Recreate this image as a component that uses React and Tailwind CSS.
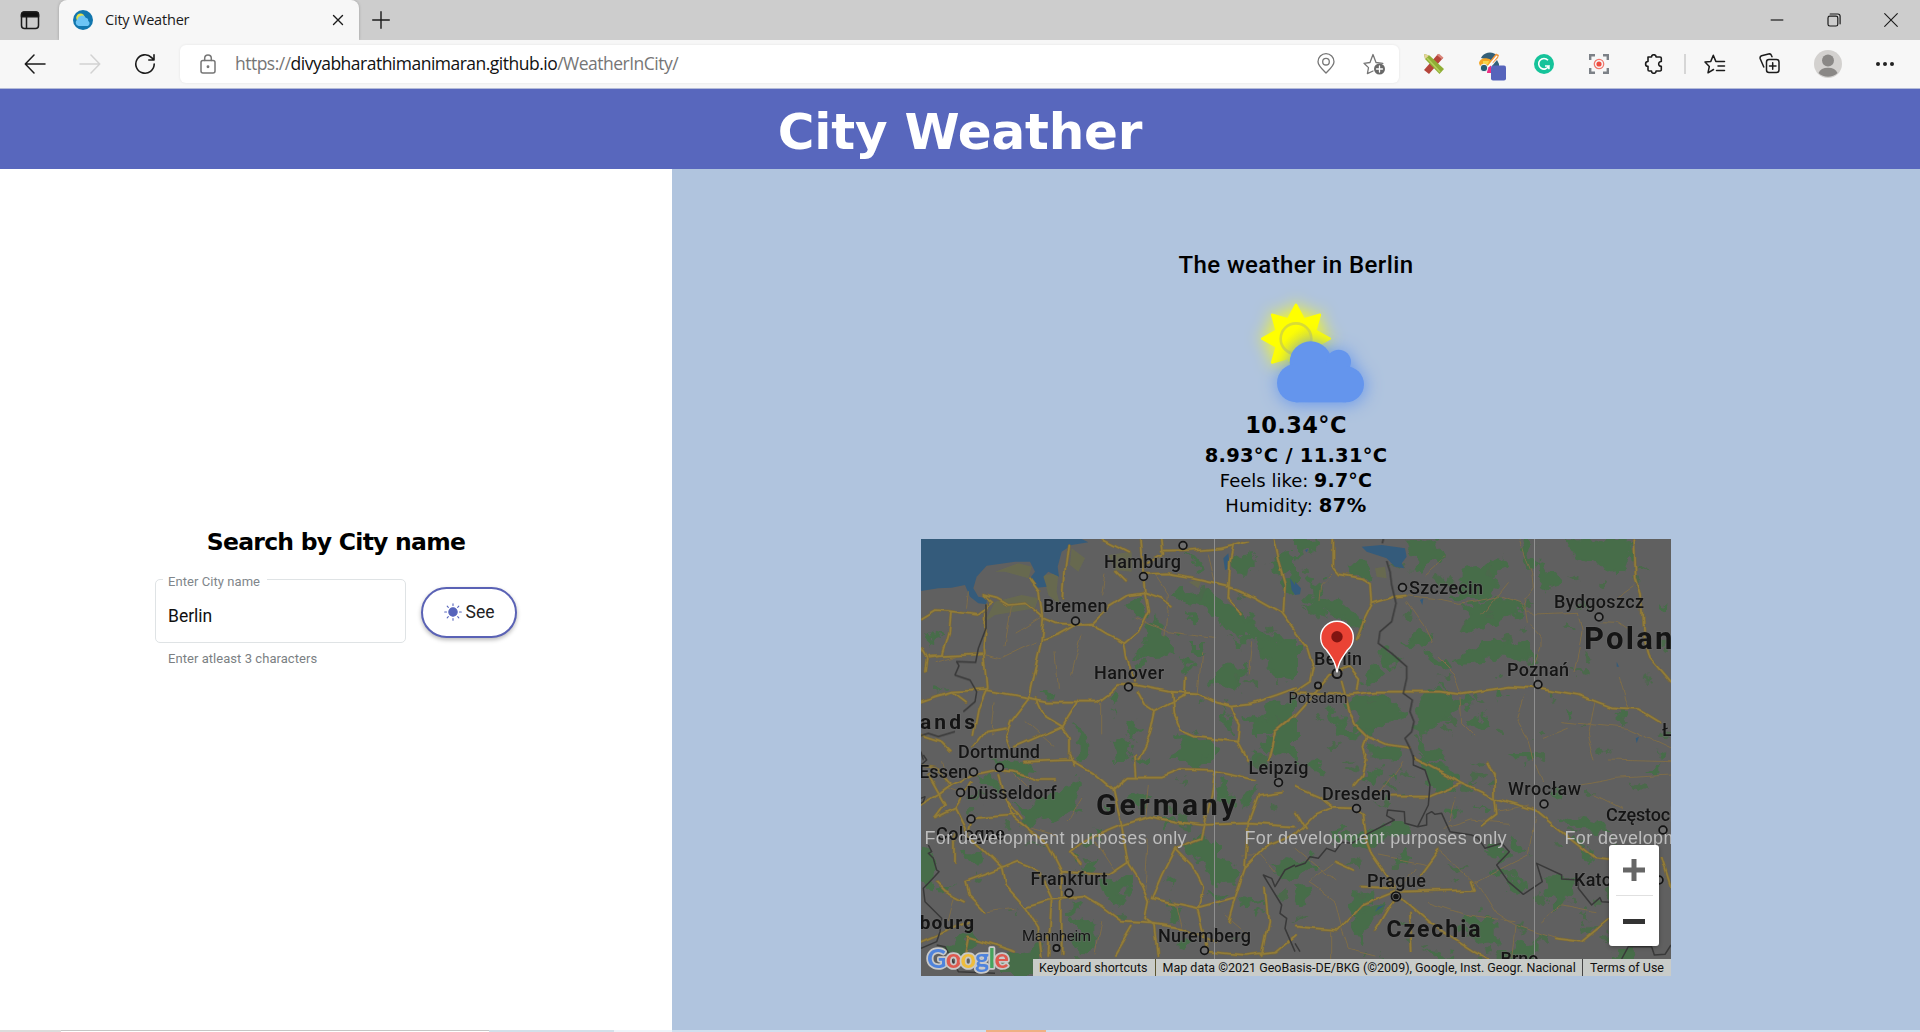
import React from "react";

const VERDANA = "font-['DejaVu_Sans',Verdana,sans-serif]";
const ROBOTO = "font-[Roboto,sans-serif]";

/* ---------- browser chrome ---------- */

function Stroke({ w = 20, h = 20, box = "0 0 20 20", c = "#1b1b1b", sw = 1.5, children }) {
  return (
    <svg width={w} height={h} viewBox={box} fill="none" stroke={c} strokeWidth={sw} strokeLinecap="round" strokeLinejoin="round" className="shrink-0">
      {children}
    </svg>
  );
}

function TabBar() {
  return (
    <div className="flex h-10 items-stretch bg-[#cdcdcd]">
      <div className="flex w-[59px] items-center justify-center">
        <Stroke>
          <rect x="1.5" y="2" width="17" height="16.5" rx="3" />
          <path d="M1.5 4.5a2.5 2.5 0 0 1 2.500-2.500h12a2.500 2.500 0 0 1 2.500 2.500v2.200h-17z" fill="#111" />
          <path d="M6.500 7v11" />
        </Stroke>
      </div>
      <div className="flex w-[300px] items-center rounded-t-lg bg-[#f7f7f7] pl-[14px] shadow-[0_0_3px_rgba(0,0,0,0.25)]">
        <svg width="20" height="20" viewBox="0 0 20 20">
          <circle cx="10" cy="10" r="10" fill="#1176ae" />
          <circle cx="7.500" cy="7.800" r="4.300" fill="#e3e04a" />
          <path d="M5.500 16a3.500 3.500 0 0 1-1-6.500 4.500 4.500 0 0 1 8.300-1.800 3 3 0 0 1 2.400 3.300 2.800 2.800 0 0 1-.4 5z" fill="#6cc4f5" />
        </svg>
        <span className="ml-3 w-[227px] whitespace-nowrap pb-px font-['Open_Sans',sans-serif] text-[14.5px] tracking-[-0.2px] text-[#1a1a1a]">City Weather</span>
        <Stroke w={12} h={12} box="0 0 12 12" sw={1.4}><path d="M1.500 1.500l9 9M10.500 1.500l-9 9" /></Stroke>
      </div>
      <div className="flex w-[43px] items-center justify-center pb-px">
        <Stroke w={18} h={18} box="0 0 18 18" sw={1.400}><path d="M9 .7v16.600M.7 9h16.600" /></Stroke>
      </div>
      <div className="ml-auto flex items-center pr-[1px]">
        <div className="flex w-[57px] justify-center"><Stroke w={14} h={14} box="0 0 14 14" sw={1.200}><path d="M.7 7h12.600" strokeLinecap="butt" /></Stroke></div>
        <div className="flex w-[57px] justify-center">
          <Stroke w={14} h={14} box="0 0 14 14" sw={1.200}><rect x="1" y="3.200" width="9.800" height="9.800" rx="1.800" /><path d="M3.200 1h7.600a2.300 2.300 0 0 1 2.300 2.300v7.500" /></Stroke>
        </div>
        <div className="flex w-[57px] justify-center"><Stroke w={14} h={14} box="0 0 14 14" sw={1.100}><path d="M.7.7l12.600 12.600M13.300.7L.7 13.300" /></Stroke></div>
      </div>
    </div>
  );
}

function Cell({ children }) {
  return <div className="flex w-[55px] shrink-0 items-center justify-center">{children}</div>;
}

function Toolbar() {
  return (
    <div className="flex h-[49px] items-center border-b border-[#b3bbd8] bg-[#f7f7f7] pb-px">
      <div className="ml-[7px] flex">
        <Cell><Stroke w={22} h={20} box="0 0 22 20"><path d="M21 10H1.500M10 1L1.300 10l8.700 9" /></Stroke></Cell>
        <Cell><Stroke w={22} h={20} box="0 0 22 20" c="#d2d2d2"><path d="M1 10h19.500M12 1l8.700 9-8.700 9" /></Stroke></Cell>
        <Cell><Stroke w={22} h={22} box="0 0 22 22" sw={1.600}><path d="M20.200 11a9.200 9.200 0 1 1-2.600-6.400L20 7M20 1.800V7h-5.200" /></Stroke></Cell>
      </div>
      <div className="ml-[8px] flex h-[38px] w-[1219px] items-center rounded-md bg-white shadow-[0_0_3px_rgba(0,0,0,0.08)]">
        <div className="ml-5 flex w-[15px] justify-center">
          <Stroke w={16} h={20} box="0 0 16 20" c="#767676"><rect x="1" y="6.500" width="14" height="12.500" rx="2" /><path d="M4.700 6.500V4.200a3.300 3.300 0 0 1 6.600 0v2.300" /><circle cx="8" cy="12.700" r=".7" fill="#767676" /></Stroke>
        </div>
        <span className="ml-[20px] whitespace-nowrap font-['Open_Sans',sans-serif] text-[17.5px] tracking-[-0.51px] text-[#767676]">
          https://<span className="text-[#111]">divyabharathimanimaran.github.io</span>/WeatherInCity/
        </span>
        <div className="ml-auto mr-[13px] flex items-center gap-[28px]">
          <Stroke w={18} h={21} box="0 0 18 21" c="#767676" sw={1.300}><path d="M9 20C5 16 1 12.500 1 8.700a8 8 0 0 1 16 0C17 12.500 13 16 9 20z" /><circle cx="9" cy="8.700" r="3.300" /></Stroke>
          <Stroke w={23} h={22} box="0 0 23 22" c="#767676" sw={1.300}>
            <path d="M10 18l-5.600 2.600 1.100-6L1 10.300l6-.8L10 1.500l3 8 6.800.8" />
            <circle cx="16.500" cy="16" r="5.500" fill="#696969" stroke="none" />
            <path d="M16.500 13v6M13.500 16h6" stroke="#fff" />
          </Stroke>
        </div>
      </div>
      <div className="ml-[7px] flex items-center">
        <Cell>
          <svg width="22" height="22" viewBox="0 0 22 22"><path d="M1 17L15 1l5 4L6 21z" fill="#b5453b" /><path d="M14 2.200l2-1.500 4.500 4-1.500 1.600z" fill="#d9867b" /><path d="M1 1l5.500 1.500L21 16l-4.500 5L2 6z" fill="#8fae35" /><path d="M1 1l5 1.500L2.200 6z" fill="#e8d49a" /><path d="M4 5l13 14" stroke="#b5cf5c" strokeWidth="1.500" /></svg>
        </Cell>
        <Cell>
          <svg width="30" height="30" viewBox="0 0 30 30" className="ml-[7px] mt-[7px]">
            <path d="M4 6A10 10 0 0 1 19 2.500L15 9z" fill="#345f78" />
            <path d="M2 11a7 5.500 0 0 1 13-2l-3 5H3z" fill="#f5a623" />
            <path d="M6 9h6l-1 3H6z" fill="#f8d64a" />
            <path d="M13 9l6-7.500 3 1.500-1 3-5 5z" fill="#f3973a" />
            <path d="M15 14l5-6 2 4v3h-7z" fill="#33617a" />
            <path d="M10 16l10-12" stroke="#fff" strokeWidth="1.500" />
            <path d="M10.500 16l3.500-2.500V21h-4z" fill="#ec2d82" />
            <circle cx="7" cy="16" r="3.800" fill="#275d74" stroke="#fff" />
            <rect x="14" y="13.500" width="15" height="15" rx="2" fill="#5664bb" />
          </svg>
        </Cell>
        <Cell>
          <svg width="20" height="20" viewBox="0 0 20 20" fill="none"><circle cx="10" cy="10" r="10" fill="#15c39a" /><path d="M14 6.300A5.300 5.300 0 1 0 14.800 12H11M14.900 11.300v4" stroke="#fff" strokeWidth="1.600" /></svg>
        </Cell>
        <Cell>
          <svg width="20" height="20" viewBox="0 0 20 20" fill="none"><path d="M1.200 6V1.200H6M14 1.200h4.800V6M18.800 14v4.800H14M6 18.800H1.200V14" stroke="#7c8187" strokeWidth="2.400" /><circle cx="10" cy="10" r="4.700" stroke="#f0786e" strokeWidth="1.300" /><circle cx="10" cy="10" r="2.600" fill="#ee4c40" /></svg>
        </Cell>
        <Cell>
          <Stroke w={20} h={20} sw={1.600}><path d="M4 3h3.500a2.300 2.300 0 0 1 4.600 0H16a1.300 1.300 0 0 1 1.300 1.300v3.200c-3.500-.2-3.500 5 0 4.800v3.200A1.300 1.300 0 0 1 16 17h-3.900a2.300 2.300 0 0 1-4.600 0H5.300A1.300 1.300 0 0 1 4 15.700v-3.400a2.400 2.400 0 0 1 0-4.800z" /></Stroke>
        </Cell>
      </div>
      <div className="ml-[3px] h-5 w-[2px] bg-[#d6d6d6]" />
      <div className="ml-[1px] flex items-center">
        <Cell><Stroke w={22} h={20} box="0 0 22 20"><path d="M9.500 15.500L4 18.800l1.300-6.300L1 8.100l5.800-.7L9.300 1.200l2.500 6.200h8.700M14 12h6.500M12.500 16.500h8" /></Stroke></Cell>
        <Cell><Stroke w={21} h={21} box="0 0 21 21"><rect x="7.500" y="6.500" width="12.500" height="13" rx="2.500" /><path d="M13.700 9.800v6.500M10.500 13h6.500M4.800 14L1.300 6A2.500 2.500 0 0 1 2.600 2.800L9.500 1a2.500 2.500 0 0 1 3 1.500l.5 1.200" /></Stroke></Cell>
        <div className="ml-[17px] w-7">
          <svg width="28" height="28" viewBox="0 0 28 28"><circle cx="14" cy="14" r="14" fill="#d3d1cf" /><circle cx="14" cy="10.500" r="6" fill="#8a8886" /><path d="M4.500 23a10 7.500 0 0 1 19 0A14 14 0 0 1 4.500 23z" fill="#8a8886" /></svg>
        </div>
        <div className="ml-[34px] flex gap-[3px]">
          <i className="h-[4px] w-[4px] rounded-full bg-[#222]" /><i className="h-[4px] w-[4px] rounded-full bg-[#222]" /><i className="h-[4px] w-[4px] rounded-full bg-[#222]" />
        </div>
      </div>
    </div>
  );
}

/* ---------- weather illustration ---------- */

function star(cx, cy, R, r, n) {
  const pts = [];
  for (let i = 0; i < n * 2; i++) {
    const a = (Math.PI * i) / n - Math.PI / 2;
    const q = i % 2 ? r : R;
    pts.push(`${(cx + q * Math.cos(a)).toFixed(1)},${(cy + q * Math.sin(a)).toFixed(1)}`);
  }
  return pts.join(" ");
}

function SunCloud() {
  return (
    <svg width="128" height="110" viewBox="330 205 384 330" className="overflow-visible">
      <defs>
        <linearGradient id="sun" x1="0" y1="0" x2="1" y2="1"><stop offset=".35" stopColor="#ffff00" /><stop offset="1" stopColor="#d3d83e" /></linearGradient>
      </defs>
      <g className="[filter:drop-shadow(0_0_26px_#ffff00)]">
        <polygon points={star(468, 327, 101, 62, 8)} fill="#ffff00" stroke="#ffff00" strokeWidth="8" strokeLinejoin="round" />
      </g>
      <circle cx="468" cy="327" r="46" fill="url(#sun)" stroke="#d9dc35" strokeWidth="8" />
      <g fill="#6495ed" className="[filter:drop-shadow(3px_4px_26px_#6495ed)]">
        <circle cx="512" cy="398" r="63" />
        <circle cx="596" cy="397" r="37" />
        <rect x="411" y="402" width="120" height="116" rx="58" />
        <rect x="560" y="410" width="112" height="108" rx="54" />
        <rect x="466" y="400" width="152" height="118" />
      </g>
    </svg>
  );
}

/* ---------- map ---------- */

// Each quadrant is drawn on its own 3x canvas and placed by a translation.
const QUADS = [
  {
    at: "translate(-6 -4) scale(.33333)", clip: "url(#qa)",
    water: "M18 12H500L520 22 470 30 440 50 428 95 432 125 400 110 385 125 395 155 365 158 345 130 360 110 345 80 300 80 215 92 185 125 175 160 190 185 215 190V208L190 205 165 185 150 150 110 158 70 160 18 168ZM925 70L940 55 945 100 930 105ZM1125 130L1140 150V180L1130 165Z",
    pale: "M240 200L320 180 370 190 360 220 240 240 210 260ZM240 110L310 85 350 95 340 130 270 110ZM470 40L510 70 490 110 465 90ZM385 120L430 115 425 170 435 210 400 180ZM580 60L650 50 650 110 600 105ZM820 140L860 135 850 160Z",
    green: "M780 180L850 170 900 190 960 215 1000 240 1010 275 1060 300 1050 310 990 310 940 280 900 250 880 215 800 200ZM1030 310L1070 300 1100 315 1140 320V430L1080 420 1060 385 1040 370ZM710 250L740 270 735 300 775 310 770 360 700 365 660 360 700 330 695 290ZM655 210L680 205 690 235 670 255 650 240ZM815 235L845 235 850 255 820 260ZM835 330L875 330 865 355 830 350ZM950 70L1000 50 1030 80 990 110 960 110ZM1060 90L1140 60V180L1110 160 1120 110ZM820 65L855 75 860 110 840 115 850 85ZM900 410L940 400 990 395 980 440 940 450 890 445ZM800 375L835 385 820 410ZM790 595L850 600 895 640 880 675 770 675 790 630ZM590 620L630 610 655 640 640 675 590 675 605 650ZM470 570L510 600 520 640 515 675 500 675 500 620ZM635 560L665 575 650 610 630 590ZM590 480L610 510 600 525 580 490ZM980 545L1060 560 1060 510 1140 490V675L1100 640 1070 600 1020 600 1030 570ZM1040 620L1090 610 1110 650 1060 660ZM60 460L85 465 70 480ZM45 300L70 305 55 315ZM380 470L420 475 410 485ZM690 375L700 385 660 400ZM930 520L945 600 925 560ZM1000 670L1030 640 1040 675ZM965 320L985 315 980 330Z",
    roads: "M18 250L60 225 100 228 190 240 235 205 205 180M205 180L245 190 280 210 330 205 385 250 420 265 530 270 580 300 628 325 670 290 700 230 690 175 685 125 675 12M345 130L375 170 385 250 378 320 355 420 340 490 285 560 270 600 285 640M385 312L430 295 475 270 530 265 580 215 640 178 690 172 740 190 770 212M215 210L205 340 215 460 190 520 175 600M18 500L60 485 110 470 210 465 340 488 400 500 550 500 590 470 610 450 660 450 760 470 850 475 900 500 945 512 1010 505 1085 480 1140 460M628 325L635 370 660 440M668 470L690 510 720 530 765 505 810 480 812 425M720 530L705 600 670 675M770 470L775 540 795 585 840 605 970 620 975 570 945 512M970 620L1000 675M1140 540L1080 590 1060 675M365 490L390 545 440 575 490 495M440 575L300 635M440 575L465 610V675M685 120L760 118 830 130 940 155 1020 190 1100 235 1140 290M740 50L830 48 920 40 1000 20M955 30L945 80 940 190 980 235M1075 12L1090 80 1110 150 1105 235M565 12L640 50M740 12L745 60 690 90M445 190L450 110 460 35M105 230L100 290 80 360 40 365M18 340L35 370 30 410M40 362L200 355M175 640L215 590 270 580M18 600L80 620 110 650M600 110L630 140M110 470L150 500",
    thin: "M205 355L260 368 360 320M160 170L155 220M290 210L270 330M660 250L760 290 900 310M380 250L300 300M420 350L430 460M500 300L470 420M720 120L760 180 750 300M860 350L850 470M60 380L130 360M560 500L560 600M560 180L570 120M880 60L900 140M1010 320L1000 420M240 500L230 600M330 560L420 640",
    border: "M213 208V280L190 340 182 382 125 380 132 392 120 420 165 435 185 470 180 500 145 530M120 590L70 605 40 595 18 602M18 650L25 675",
  },
  {
    at: "translate(374 -4) scale(.33333)", clip: "url(#qb)",
    water: "M200 35L260 30 330 40 335 65 320 85 328 100 300 95 275 70 215 50ZM0 140L18 160 15 178 0 180ZM375 195L385 190 382 210ZM1022 610L1032 605 1025 625ZM30 45L40 42 35 52ZM965 380L972 395 965 395Z",
    pale: "M240 100L270 95 275 130 245 125Z",
    green: "M330 20L420 15 440 60 400 90 380 110 350 100 355 60ZM30 210L110 195 190 230 215 260 200 290 120 240 70 230ZM820 20L1010 12V60L1000 120 960 120 930 95 900 80 840 60ZM500 110L560 95 620 60 650 90 600 105 590 120 620 160 560 200 500 195 470 190 500 150ZM510 225L600 200 690 205 660 240 600 260 560 290 510 275 525 250ZM480 370L530 350 560 325 640 315 710 340 718 365 600 365 500 385ZM360 500L420 475 500 510 470 540 430 560 400 590 370 605 365 550ZM160 500L230 480 310 510 320 540 260 560 220 600 185 580 200 540 160 520ZM120 575L180 580 190 610 130 605ZM220 620L270 635 310 640 320 675 230 670 225 640ZM680 12L705 15 700 60 730 90 700 100ZM1095 215L1125 220 1105 240ZM520 560L580 545 570 570 530 590ZM370 620L430 645 450 675 400 675ZM380 290L410 300 390 330 340 325ZM400 350L470 390 450 400 410 370ZM160 95L215 85 235 120 200 125 170 110ZM620 460L630 485 615 490ZM815 530L830 545 820 555ZM730 90L800 130 770 160 735 140ZM230 390L270 400 240 440 200 430ZM0 20L60 12 50 40 0 60ZM100 520L140 540 150 575 110 560ZM40 140L90 150 70 200 40 190ZM980 520L1000 555 985 570ZM440 460L520 500 500 520ZM1090 650L1115 660 1100 675ZM270 340L320 385 300 400 250 350Z",
    roads: "M115 12V100L130 118 200 130 228 150 232 205 205 260 185 310M232 205L300 185 335 182M0 290L40 340 55 390 45 440 0 470M140 440L165 530 180 570 215 605 270 630 345 642M215 605L205 640 215 675M0 475L90 478 165 478 240 470 430 470 500 478 640 455 740 460 850 480 950 517 1030 522 1095 562M1018 12L1022 130 1038 180 1045 300 1065 370 1125 440M0 545L50 490 80 450 105 420 160 395 190 430 185 465",
    thin: "M335 182L420 190 490 205 560 195 620 183 680 205 715 240 850 235M675 12L690 60 710 110 715 155 690 190 700 260 735 300V335L718 385M910 260L970 262 1010 290M1015 150L980 175 960 195M445 60L420 95 390 120M335 200L385 270 410 320M430 370L480 420 500 475M495 490L500 560 540 600M690 480L665 560 700 620 715 675M110 118L80 150 75 200M640 140L560 240M850 235L865 290 840 410M900 500L880 600 900 675M800 560L1000 580 1128 640M970 430L1000 522M745 610L820 580",
    border: "M265 12L262 25M275 78L285 110 290 150 303 205 290 260 255 290 250 325 290 355 335 395V430L325 475 352 495 345 530 357 560 350 590 330 610 345 640 358 675",
  },
  {
    at: "translate(-6 216) scale(.33333)", clip: "url(#qc)",
    water: "",
    pale: "",
    green: "M290 150L340 150 400 120 450 100 470 70 500 95 480 130 490 170 430 190 380 200 320 215 330 180ZM555 370L600 375 640 360V400L620 420 600 455 570 440 580 410ZM815 265L900 250 900 310 970 350 960 380 900 380 870 330 830 310ZM270 600L310 605 380 580 355 660H270ZM18 285L45 290 72 350 40 390 18 370ZM480 480L510 500 550 510V560L500 590 480 540ZM230 15L320 25 360 60 310 55ZM785 0H870L860 40 800 30ZM900 80L950 90 960 150 910 150ZM760 460L800 450 810 490 770 500ZM100 580L170 530 190 570 110 610ZM1080 340L1140 300V360L1110 380ZM640 130L670 110 710 130 680 160ZM470 300L500 310 480 330ZM145 290L200 295 190 320 150 310ZM560 140L590 150 580 165ZM730 180L780 200 760 220ZM500 340L545 320 530 350ZM660 10L690 0 690 20ZM750 380L775 375 765 400ZM980 430L1050 435 1000 445ZM460 440L485 450 470 475ZM60 400L100 400 80 420ZM980 120L1020 95 1000 150ZM540 230L560 225 550 250ZM880 420L930 430 910 440ZM200 60L240 70 250 100 220 90ZM1020 480L1040 470 1030 500ZM800 550L830 570 800 580Z",
    roads: "M18 150L70 120 110 90 170 60 240 45 300 50 370 75 420 75M330 20L470 15 530 50 595 105 640 68 740 68 800 45 900 48 960 60 1020 75M595 105L605 150 620 210 560 235 500 260 465 290 500 330M620 210L700 185 780 200 860 210 990 205 1140 215M620 210L640 330 680 390 700 440 690 490 720 510 730 600M780 280L740 360 710 430 850 460 960 430 990 340 1060 270 1140 240M780 280L830 330 865 400 850 460 870 540 880 590 990 600 1080 590 1140 540M330 455L400 435 510 425 560 455 620 500 710 505 800 520 900 560M270 130L300 190 400 270 440 350V600M410 430L400 600M330 455L370 520 380 600M330 455L270 390 260 340 310 320 370 345 410 430M170 190L160 240 260 340 150 380 160 420 210 470M60 380L90 410 150 440M60 190L120 160 170 80M170 190L310 180M660 0L665 68M250 60L270 130 320 190M900 48L890 120 860 250 780 280M650 515L600 600M1050 400L1060 500 1040 600M1030 120L1000 200 990 340M1030 120L1100 110M160 545L300 590M160 545L150 600M18 560L160 500M40 60L90 150 60 190M18 30L60 40 110 90M120 160L160 240M465 0L480 30M120 240V320M960 430L940 500M440 350L580 360 640 320",
    thin: "M300 60L350 110M700 90L690 180M500 130L460 200M540 260L600 350M700 250L690 400M780 440L800 520M980 300L1040 300 1080 350M220 470L300 460M560 500L540 600M350 220L420 240M90 100L150 120M80 20L100 90M930 480L1000 540M120 420L100 500",
    border: "M25 0L35 15 18 30M18 130L30 125 25 140 18 145M40 270L50 290 40 295 55 310 65 345 72 350 40 385 25 400 30 440 80 490 75 530 65 560 18 580M1140 330L1110 345 1080 395 1070 370 1045 360 1060 385 1100 450 1095 475 1115 490 1110 520 1140 590M65 570L90 575 130 650 240 655",
  },
  {
    at: "translate(374 216) scale(.33333)", clip: "url(#qd)",
    water: "M250 455L270 450 240 470Z",
    pale: "",
    green: "M370 0L400 10 420 35 460 40 490 85 415 110 395 60ZM150 250L220 235 300 205 340 215 300 235 240 270 170 275ZM180 420L230 405 235 440 210 465 200 480 165 460ZM180 500L220 460 270 450 230 500 210 530 190 560ZM750 370L830 370 840 390 825 410 780 460 765 430 745 420 760 390ZM800 180L900 200 960 230 850 225ZM570 280L640 285 620 315 590 310ZM600 340L640 360 680 385 690 415 640 400 640 375ZM500 480L550 475 560 510 605 500V560L540 565 520 530ZM620 600L640 580 720 560 715 612H620ZM0 310L50 310 70 330 30 350 0 360ZM0 400L35 395 40 430 10 440 0 420ZM310 290L330 285 345 320 320 335 305 310ZM650 0H720L700 30ZM230 30L250 45 230 90 200 70ZM850 280L900 290 880 310ZM650 250L680 280 700 300 670 290ZM440 160L490 165 470 180ZM40 30L80 20 70 45ZM770 100L800 110 790 130ZM100 240L160 220 120 260ZM550 150L580 160 570 175ZM950 590L1020 580 1010 612H960ZM270 60L290 50 300 70ZM1060 60L1090 40 1090 60ZM400 590L480 600 430 612Z",
    roads: "M0 95L70 125 110 158 60 180 0 240M110 158L180 160M175 160L205 180 215 260 230 300 300 400M290 125L400 125 500 85 600 130 720 165 780 215 900 310 940 315M500 85L360 10M580 20L600 60V130L605 180 560 215M300 400L200 395M300 410L200 450 130 525 0 515M310 410L540 405 530 375M375 360L430 285M320 430L400 500 540 590 580 612M300 430L240 530M345 470L350 590M215 0L200 60 175 90M780 550L860 560 940 495M1100 310L1128 400M120 320L175 345M0 170L30 220",
    thin: "M40 380L120 440 140 520 160 580 240 600M540 375L600 470 660 510 650 610M660 510L780 550M720 185L700 300 600 350 540 380 430 285M725 30L745 80M40 380L120 320M450 220L530 195 640 205M600 170L700 150M320 20L250 120M360 340L320 400M0 280L120 380M400 440L520 480 660 500M740 500L800 450 900 470M860 90L960 70 1128 60M900 120L980 160M110 520V612M480 130L460 200M250 300L400 330M940 15L1128 20",
    border: "M355 0V30L390 45 405 90 400 150 368 215 330 205 328 170 278 165 275 182 298 195 220 235 170 265 140 262 120 290 95 280 70 310 45 305 30 325 0 335M368 215L395 210V178L410 170 420 178 440 175 465 230 530 240 550 250 570 280 620 265 643 290 605 330 640 380 685 418 742 380 725 325 800 360V372L850 375V400L890 450 915 428 920 440 945 442M980 612L1000 575 1070 575 1078 600 1110 598 1128 570M0 565L15 590",
  },
];

// Small woodland patches scattered between the big forests.
const PATCHES = (() => {
  let s = 7;
  const rnd = () => (s = (s * 16807) % 2147483647) / 2147483647;
  const out = [];
  for (let i = 0; i < 150; i++) {
    const x = 20 + rnd() * 730;
    const y = 20 + rnd() * 417;
    const w = 2 + rnd() * 6;
    const h = 1.5 + rnd() * 4;
    if (x < 260 && y < 215) continue;
    out.push(`M${(x - w).toFixed(1)} ${y.toFixed(1)}L${x.toFixed(1)} ${(y - h).toFixed(1)} ${(x + w).toFixed(1)} ${(y + h / 2).toFixed(1)} ${x.toFixed(1)} ${(y + h).toFixed(1)}Z`);
  }
  return out.join("");
})();

// [label, x, baseline y, width, size, weight]
const LABELS = [
  ["Hamburg", 183, 29, 77, 18, 500],
  ["Bremen", 122, 73, 64.500, 18, 500],
  ["Hanover", 173, 139.500, 70, 18, 500],
  ["ands", -1, 190, 55, 21, 700],
  ["Dortmund", 37, 219, 82, 18, 500],
  ["Essen", -2, 239, 49, 18, 500],
  ["Düsseldorf", 45.500, 259.500, 90, 18, 500],
  ["Cologne", 15, 301, 69, 18, 500],
  ["Germany", 175, 276, 140, 30, 700],
  ["Frankfurt", 109.500, 345.500, 77, 18, 500],
  ["mbourg", -19, 390, 72, 19, 700],
  ["Mannheim", 101, 402, 69, 15, 400],
  ["Nuremberg", 237, 403, 93, 18, 500],
  ["Leipzig", 327.500, 235, 60, 18, 500],
  ["Szczecin", 488, 55, 74, 18, 500],
  ["Bydgoszcz", 633, 69, 90, 18, 500],
  ["Poland", 663, 109.500, 108, 31, 700],
  ["Berlin", 393, 125.500, 48, 18, 500],
  ["Potsdam", 367.500, 164, 59, 14.500, 400],
  ["Poznań", 586, 136.500, 62, 18, 500],
  ["Łódź", 741, 197, 38, 18, 500],
  ["Dresden", 401, 261, 69, 18, 500],
  ["Wrocław", 587, 256, 73, 18, 500],
  ["Częstochowa", 685, 282, 107, 18, 500],
  ["Prague", 446, 348, 59, 18, 500],
  ["Katowice", 653, 346.500, 76, 18, 500],
  ["Czechia", 465.500, 398, 94, 23, 700],
  ["Brno", 579.500, 425.500, 38, 18, 500],
];

const DOTS = [
  [222.500, 37.500], [262, 6.500], [154.500, 82], [207.500, 148], [78.500, 228.500], [52.500, 233], [39.500, 253.500], [50, 280], [148, 354],
  [135.500, 409, 3.200], [283.500, 411.500], [357.500, 243.500], [481.500, 48.500], [678, 78], [617, 145.500], [397, 146.500, 3.200],
  [435.500, 269.500], [623, 265], [742, 291], [738, 341],
];

const WATERMARKS = [[3.500, 262], [323.500, 262], [643.500, 262]];

function CityMap() {
  return (
    <div className="relative h-[437px] w-[750px] overflow-hidden bg-[#606060]">
      <svg width="750" height="437" viewBox="0 0 750 437" className="block">
        <defs>
          <clipPath id="qa"><rect x="18" y="12" width="1122" height="660" /></clipPath>
          <clipPath id="qb"><rect x="0" y="12" width="1128" height="660" /></clipPath>
          <clipPath id="qc"><rect x="18" y="12" width="1122" height="660" /></clipPath>
          <clipPath id="qd"><rect x="0" y="12" width="1128" height="660" /></clipPath>
          <filter id="rough" x="-5%" y="-5%" width="110%" height="110%">
            <feTurbulence type="fractalNoise" baseFrequency=".07" numOctaves="3" seed="4" />
            <feDisplacementMap in="SourceGraphic" scale="22" xChannelSelector="R" yChannelSelector="G" />
          </filter>
          <filter id="wobble" x="-5%" y="-5%" width="110%" height="110%">
            <feTurbulence type="fractalNoise" baseFrequency=".045" numOctaves="2" seed="9" />
            <feDisplacementMap in="SourceGraphic" scale="7" xChannelSelector="R" yChannelSelector="G" />
          </filter>
        </defs>
        <g filter="url(#rough)">
          {QUADS.map((q) => (
            <path key={q.at} transform={q.at} d={q.green} fill="#476d4a" stroke="#476d4a" strokeWidth="6" />
          ))}
          <path d={PATCHES} fill="#4b694c" />
        </g>
        {QUADS.map((q) => (
          <g key={q.at} transform={q.at} strokeLinejoin="round" strokeLinecap="round" fill="none">
            <g clipPath={q.clip}>
              <path d={q.pale} fill="#6b6d49" fillOpacity=".7" />
              <path d={q.water} fill="#345b7b" />
            </g>
          </g>
        ))}
        <g filter="url(#wobble)">
          {QUADS.map((q) => (
            <g key={q.at} transform={q.at} strokeLinejoin="round" strokeLinecap="round" fill="none">
              <path d={q.thin} stroke="#7d6c48" strokeWidth="3" />
              <path d={q.roads} stroke="#75673f" strokeWidth="9" />
              <path d={q.roads} stroke="#927c38" strokeWidth="5" />
            </g>
          ))}
        </g>
        {QUADS.map((q) => (
          <path key={q.at} transform={q.at} d={q.border} fill="none" stroke="#393939" strokeWidth="4.500" strokeLinejoin="round" />
        ))}
        <path d="M293.500 0v437M613.500 0v437" stroke="#8f8f8f" strokeWidth="1" />
        <g fill="#6e6e6e" stroke="#141414" strokeWidth="1.700">
          {DOTS.map(([x, y, r]) => <circle key={x} cx={x} cy={y} r={r || 3.900} />)}
          <circle cx="416" cy="134.500" r="4.500" strokeWidth="2" />
          <circle cx="475" cy="357.500" r="4.500" />
          <circle cx="475" cy="357.500" r="2" fill="#141414" />
        </g>
        <g fontFamily="Roboto, sans-serif" fill="#151515" stroke="#6a6a6a" strokeWidth="1.600" strokeOpacity=".6" paintOrder="stroke">
          {LABELS.map(([t, x, y, w, s, wt]) => (
            <text key={t} x={x} y={y} textLength={w} fontSize={s} fontWeight={wt}>{t}</text>
          ))}
        </g>
        <g fontFamily="Liberation Sans, Arial, sans-serif" fontSize="18" fill="#bdbdbd">
          {WATERMARKS.map(([x, w]) => <text key={x} x={x} y="304.500" textLength={w}>For development purposes only</text>)}
        </g>
        <path d="M416 133.500c-1.500-11-5.500-15-10.500-22.500a16.300 16.300 0 1 1 21 0c-5 7.500-9 11.500-10.500 22.500z" fill="#ea4335" stroke="#fff" strokeWidth="1.400" />
        <circle cx="416" cy="97.800" r="5.700" fill="#811411" />
        <g fontFamily="Lato, sans-serif" fontSize="27" fontWeight="700" stroke="#c9c9c9" strokeWidth="3.500" strokeLinejoin="round" paintOrder="stroke">
          <text x="6" y="428.500" textLength="82" fill="#4f83dc">
            G<tspan fill="#dd5a4f">o</tspan><tspan fill="#eebc3c">o</tspan><tspan fill="#4f83dc">g</tspan><tspan fill="#47a35c">l</tspan><tspan fill="#dd5a4f">e</tspan>
          </text>
        </g>
      </svg>
      <div className="absolute right-3 bottom-[30px] flex h-[101px] w-[50px] flex-col items-center rounded-[3px] bg-white shadow-[0_1px_4px_rgba(0,0,0,0.3)]">
        <div className="flex h-[50px] items-center"><svg width="22" height="22" viewBox="0 0 22 22"><path d="M11 0v22M0 11h22" stroke="#666" strokeWidth="5" /></svg></div>
        <div className="h-px w-[37px] bg-[#e0e0e0]" />
        <div className="flex h-[50px] items-center"><svg width="22" height="5"><rect width="22" height="5" fill="#333" /></svg></div>
      </div>
      <div className={`absolute right-0 bottom-0 flex h-[17px] w-[638px] items-stretch whitespace-nowrap bg-[#c9ccc9] leading-[18px] text-[#111] ${ROBOTO}`}>
        <span className="w-[123px] border-r border-[#5c5530] pl-1.5 text-[12.500px]">Keyboard shortcuts</span>
        <span className="w-[427px] border-r border-[#444] pl-[6.500px] text-[12.500px]">Map data ©2021 GeoBasis-DE/BKG (©2009), Google, Inst. Geogr. Nacional</span>
        <span className="pl-[7px] text-[12.500px]">Terms of Use</span>
      </div>
    </div>
  );
}

/* ---------- page panels ---------- */

function SearchPanel() {
  return (
    <section className="flex w-[672px] flex-col items-center bg-white pt-[353px]">
      <h2 className={`text-[23.500px] leading-[40px] font-bold tracking-[-0.75px] whitespace-nowrap text-black ${VERDANA}`}>Search by City name</h2>
      <div className={`mt-[17px] flex w-[362px] gap-[15px] ${ROBOTO}`}>
        <div className="w-[251px]">
          <div className="relative h-[64px] rounded-[5px] border border-[#dfe3e5] pt-[23px] pl-[12px] text-[17.500px] leading-[26px] text-[#111]">
            <span className="absolute -top-[7px] left-[7px] bg-white pr-[7px] pl-[5px] text-[13px] leading-[18px] tracking-[0.060px] whitespace-nowrap text-[#80868b]">Enter City name</span>
            Berlin
          </div>
          <p className="mt-[7px] pl-[13px] text-[13px] leading-[18px] tracking-[0.050px] whitespace-nowrap text-[#7b7f83]">Enter atleast 3 characters</p>
        </div>
        <button className="mt-2 flex h-[51px] w-[96px] items-center justify-center gap-[4px] rounded-full border-2 border-[#5a62b5] bg-white pb-px text-[17.500px] text-[#222] shadow-[0_2px_4px_rgba(0,0,0,0.28)]">
          <svg width="18" height="18" viewBox="0 0 18 18" stroke="#5664bb" strokeWidth="1.100" fill="#5664bb" strokeLinecap="round">
            <circle cx="9" cy="9" r="4.200" />
            <path d="M9 .7v1.800M9 15.500v1.800M.7 9h1.800M15.500 9h1.800M3.200 3.200l1.100 1.100M13.700 13.700l1.100 1.100M3.200 14.800l1.100-1.100M13.700 4.300l1.100-1.100" />
          </svg>
          See
        </button>
      </div>
    </section>
  );
}

function WeatherPanel() {
  return (
    <section className={`flex flex-1 flex-col items-center bg-[#b0c4de] text-black ${VERDANA}`}>
      <h2 className="mt-[80px] text-[24px] leading-8 font-medium tracking-[0.400px] whitespace-nowrap font-[Roboto,sans-serif]">The weather in Berlin</h2>
      <div className="mt-[17px] h-[110px] w-[128px] translate-x-[18px]"><SunCloud /></div>
      <p className="mt-px text-[22.500px] leading-[32px] font-bold tracking-[0.400px]">10.34°C</p>
      <p className="mt-[2px] text-[19.500px] leading-[26px] font-bold tracking-[0.250px]">8.93°C / 11.31°C</p>
      <p className="-mt-[2px] h-[26px] text-[18px] leading-[26px] whitespace-nowrap">Feels like: <b className="text-[19px] tracking-[0.200px]">9.7°C</b></p>
      <p className="h-[26px] text-[18px] leading-[26px] tracking-[0.150px] whitespace-nowrap">Humidity: <b className="text-[19.500px] tracking-[0.400px]">87%</b></p>
      <div className="mt-[20px]"><CityMap /></div>
    </section>
  );
}

export default function App() {
  return (
    <div className="flex h-[1032px] w-[1920px] flex-col overflow-hidden bg-white">
      <TabBar />
      <Toolbar />
      <header className="flex h-20 shrink-0 items-center justify-center bg-[#5867bd] pt-1.5">
        <h1 className={`text-[50px] leading-none font-bold tracking-[-0.200px] whitespace-nowrap text-white ${VERDANA}`}>City Weather</h1>
      </header>
      <main className="flex h-[861px] shrink-0">
        <SearchPanel />
        <WeatherPanel />
      </main>
      <div className="flex h-[2px] shrink-0">
        <i className="w-[61px] bg-[#dcdcdc]" />
        <i className="w-[428px] border-t border-[#c6c6c6]" />
        <i className="w-[125px] bg-[#d3e0ea]" />
        <i className="w-[58px] bg-[#eef4fa]" />
        <i className="w-[314px] bg-[#cfdfef]" />
        <i className="w-[60px] bg-[#efb083]" />
        <i className="flex-1 bg-[#cfdfef]" />
      </div>
    </div>
  );
}
